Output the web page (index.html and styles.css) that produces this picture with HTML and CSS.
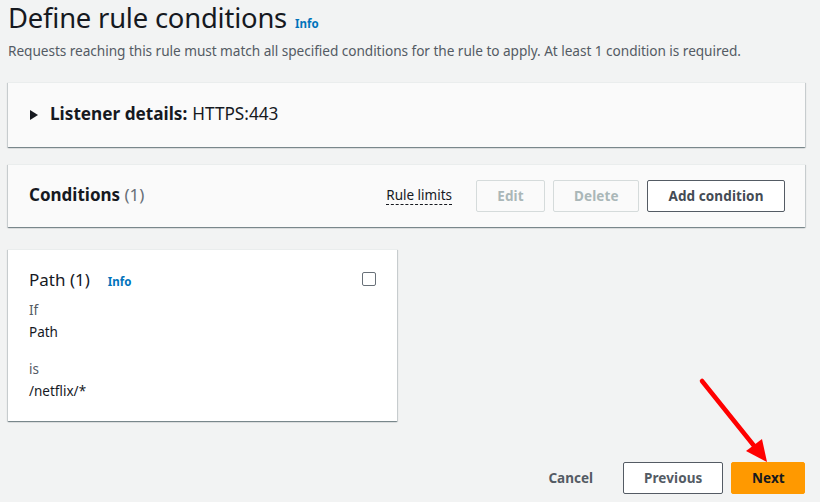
FILE: index.html
```html
<!DOCTYPE html>
<html lang="en">
<head>
<meta charset="utf-8">
<link rel="stylesheet" href="styles.css">
</head>
<body>
<div class="page">
  <header class="head">
    <h1 class="title">Define rule conditions <a class="info info-title">Info</a></h1>
    <p class="desc">Requests reaching this rule must match all specified conditions for the rule to apply. At least 1 condition is required.</p>
  </header>

  <section class="panel listener">
    <span class="caret"></span>
    <span class="listener-label">Listener details:</span>
    <span class="listener-value">HTTPS:443</span>
  </section>

  <section class="panel conditions">
    <h2 class="cond-title">Conditions <span class="count">(1)</span></h2>
    <div class="actions">
      <span class="limits">Rule limits</span>
      <button class="btn btn-disabled btn-edit">Edit</button>
      <button class="btn btn-disabled btn-delete">Delete</button>
      <button class="btn btn-normal btn-add">Add condition</button>
    </div>
  </section>

  <div class="card">
    <div class="card-head">
      <h3 class="card-title">Path (1) <a class="info info-card">Info</a></h3>
      <span class="checkbox"></span>
    </div>
    <div class="field">
      <div class="field-label">If</div>
      <div class="field-value">Path</div>
    </div>
    <div class="field">
      <div class="field-label">is</div>
      <div class="field-value">/netflix/*</div>
    </div>
  </div>

  <footer class="footer">
    <button class="link-btn">Cancel</button>
    <button class="btn btn-normal btn-prev">Previous</button>
    <button class="btn btn-primary btn-next">Next</button>
  </footer>
</div>

<svg class="arrow" width="820" height="502" viewBox="0 0 820 502">
  <line x1="702" y1="381" x2="755" y2="447" stroke="#ff0000" stroke-width="4.5" stroke-linecap="round"/>
  <polygon points="767,462 746,451 762,439" fill="#ff0000"/>
</svg>
</body>
</html>
```
FILE: styles.css
```css
* { box-sizing: border-box; }
html, body { margin: 0; padding: 0; }
body {
  background: #f2f3f3;
  font-family: "Noto Sans", "Open Sans", Arial, sans-serif;
  color: #16191f;
  width: 820px;
  height: 502px;
  overflow: hidden;
  position: relative;
}
.page {
  padding: 0 15px 0 8px;
  display: flex;
  flex-direction: column;
}
.head { display: flex; flex-direction: column; padding-top: 2px; }
.title {
  margin: 0;
  font-weight: 400;
  font-size: 27.4px;
  line-height: 32px;
  height: 32px;
  letter-spacing: -0.2px;
  display: flex;
  align-items: baseline;
  gap: 8px;
}
.info {
  color: #0073bb;
  font-weight: 700;
  font-size: 11.5px;
  letter-spacing: 0;
}
.desc {
  margin: 7px 0 0;
  font-size: 13.65px;
  line-height: 20px;
  color: #545b64;
  letter-spacing: -0.05px;
}
.panel {
  background: #fafafa;
  box-shadow: 0 1px 1px 0 rgba(0, 28, 36, 0.35), 1px 1px 1px 0 rgba(0, 28, 36, 0.12), -1px 1px 1px 0 rgba(0, 28, 36, 0.12);
  border-top: 1px solid #eaeded;
  display: flex;
  align-items: center;
}
.listener {
  margin-top: 21px;
  height: 65px;
  padding: 0 0 3px 22px;
  font-size: 17.2px;
  gap: 0;
}
.caret {
  width: 0; height: 0;
  border-top: 5px solid transparent;
  border-bottom: 5px solid transparent;
  border-left: 8px solid #16191f;
  margin-right: 12px;
  margin-top: 2px;
}
.listener-label { font-weight: 700; margin-right: 5px; }
.listener-value { font-weight: 400; }
.conditions {
  margin-top: 17px;
  height: 63px;
  padding: 0 20px 0 21px;
  justify-content: space-between;
}
.cond-title {
  margin: 0 0 3px;
  font-size: 17px;
  font-weight: 700;
}
.count { color: #687078; font-weight: 400; }
.actions { display: flex; align-items: center; gap: 8px; }
.limits {
  font-size: 13.5px;
  color: #16191f;
  border-bottom: 1px dashed #16191f;
  line-height: 17px;
  margin-right: 16px;
}
.btn {
  font-family: inherit;
  font-size: 13.5px;
  font-weight: 700;
  height: 32px;
  border-radius: 2px;
  background: #ffffff;
  padding: 0 20px;
  letter-spacing: 0.1px;
}
.btn-disabled { border: 1px solid #d5dbdb; color: #aab7b8; background: #fafafa; }
.btn-edit { width: 69px; }
.btn-delete { width: 86px; }
.btn-normal { border: 1px solid #545b64; color: #545b64; }
.btn-add { width: 138px; color: #444b54; }
.card {
  margin-top: 22px;
  width: 389px;
  height: 172px;
  background: #ffffff;
  box-shadow: 0 1px 1px 0 rgba(0, 28, 36, 0.35), 1px 1px 1px 0 rgba(0, 28, 36, 0.12), -1px 1px 1px 0 rgba(0, 28, 36, 0.12);
  border-top: 1px solid #eaeded;
  padding: 17px 21px 0 21px;
  display: flex;
  flex-direction: column;
}
.card-head {
  display: flex;
  justify-content: space-between;
  align-items: center;
  height: 24px;
}
.card-title {
  margin: 0;
  font-size: 17px;
  font-weight: 400;
  display: flex;
  align-items: baseline;
  gap: 18px;
}
.checkbox {
  width: 14px;
  height: 14px;
  border: 1.5px solid #687078;
  border-radius: 2px;
  margin-right: 0;
}
.field { margin-top: 8px; font-size: 13.5px; line-height: 22px; }
.field + .field { margin-top: 15px; }
.field-label { color: #545b64; }
.field-value { color: #16191f; }
.footer {
  margin-top: 41px;
  display: flex;
  justify-content: flex-end;
  align-items: center;
  gap: 8px;
}
.link-btn {
  border: none;
  background: none;
  font-family: inherit;
  font-size: 13.5px;
  font-weight: 700;
  color: #545b64;
  padding: 0;
  margin-right: 22px;
}
.btn-prev { width: 100px; color: #545b64; }
.btn-next {
  width: 74px;
  background: #ff9900;
  border: 1px solid #ff9900;
  color: #16191f;
}
.arrow { position: absolute; left: 0; top: 0; pointer-events: none; }
```
